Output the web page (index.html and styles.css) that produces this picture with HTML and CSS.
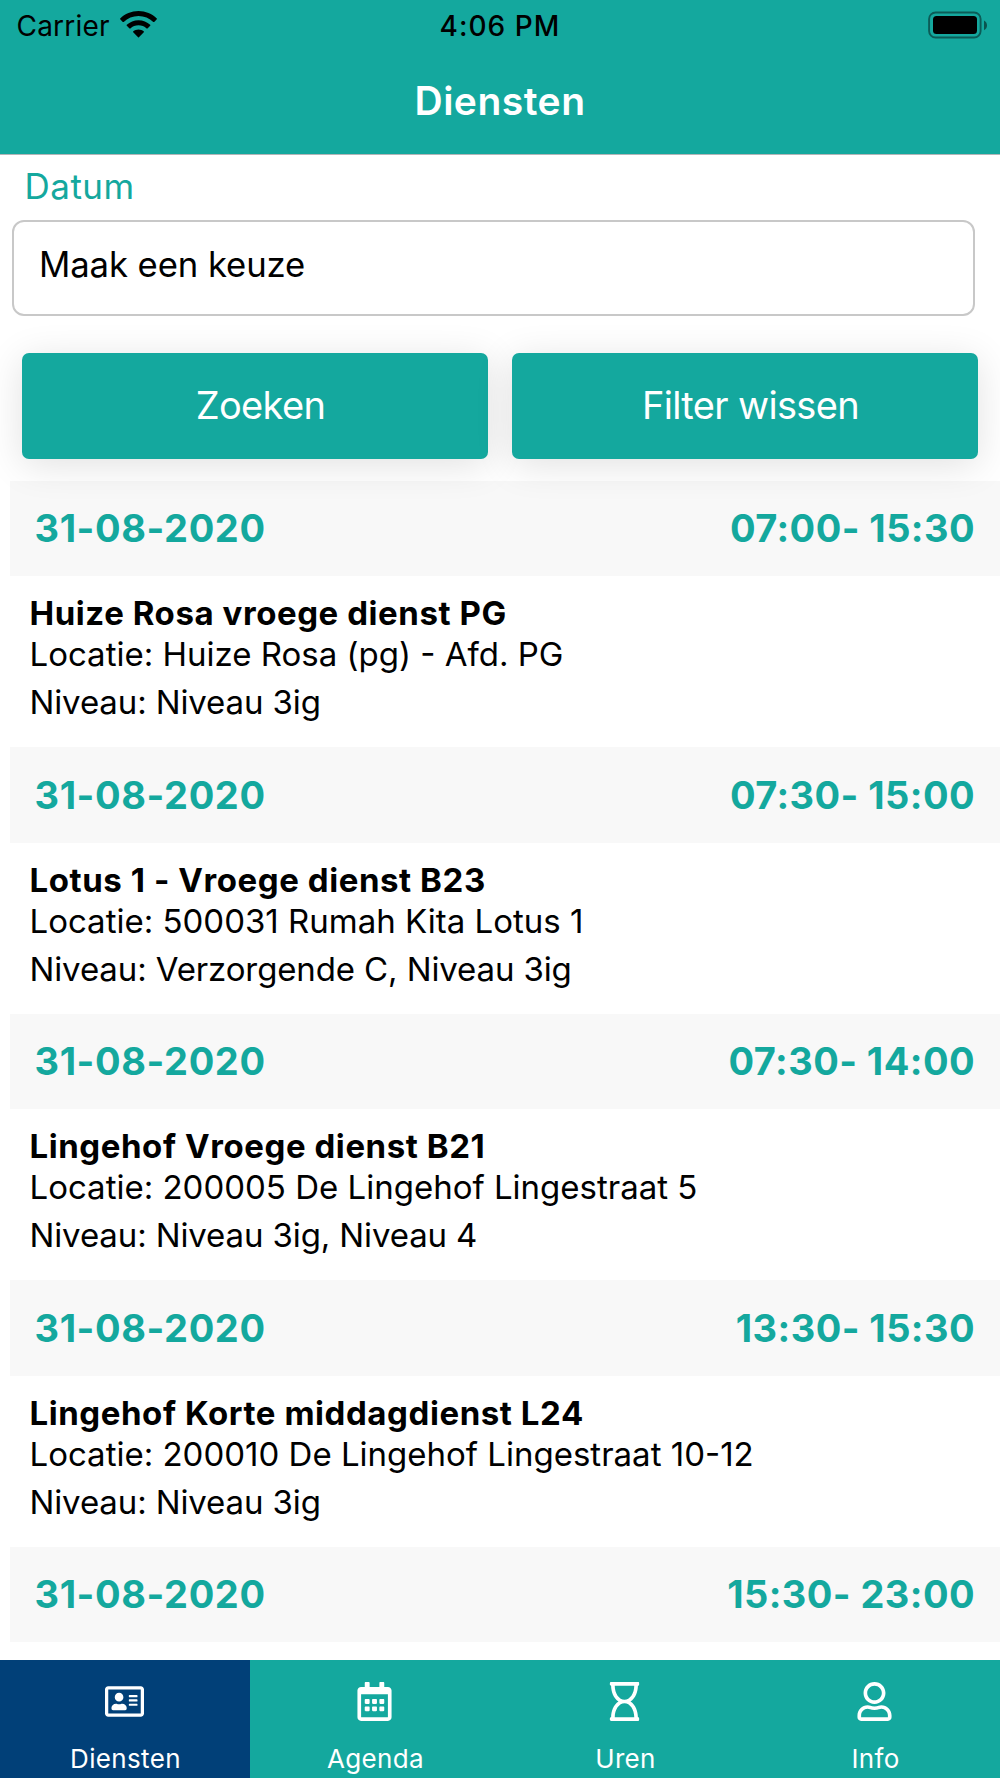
FILE: index.html
```html
<!DOCTYPE html>
<html lang="nl">
<head>
<meta charset="utf-8">
<title>Diensten</title>
<link rel="stylesheet" href="styles.css">
</head>
<body>
<div class="app">
  <header class="header">
    <div class="status">
      <div class="status-left">
        <span class="carrier">Carrier</span>
        <svg class="wifi" viewBox="0 0 37 27" width="37" height="27"><path d="M18.500 0C25.600 0 32.100 2.800 36.800 7.400q.4.4 0 .9l-2.600 2.600q-.4.4-.9 0C29.400 7.200 24.200 5 18.500 5S7.600 7.200 3.700 10.900q-.5.4-.9 0L.2 8.300q-.4-.5 0-.9C4.900 2.800 11.400 0 18.500 0z"/><path d="M18.500 9.200c4.500 0 8.600 1.700 11.700 4.600q.5.4 0 .9l-2.700 2.700q-.4.4-.9 0c-2.100-2-5-3.100-8.100-3.100s-6 1.100-8.100 3.100q-.5.4-.9 0L6.800 14.700q-.5-.5 0-.9c3.100-2.900 7.200-4.600 11.700-4.600z"/><path d="M18.500 18.400c2 0 3.800.7 5.200 1.900q.5.4.1.900l-4.900 5q-.4.4-.8 0l-4.900-5q-.4-.5.1-.9c1.400-1.200 3.200-1.900 5.200-1.900z"/></svg>
      </div>
      <span class="clock">4:06 PM</span>
      <div class="status-right">
        <svg class="battery" viewBox="0 0 60 28" width="60" height="28"><rect x="1.100" y="1.500" width="51.500" height="25" rx="6.500" fill="none" stroke="#000" stroke-opacity=".45" stroke-width="1.900"/><rect x="5" y="5" width="44" height="18" rx="3.500"/><path d="M56 9.500c4 2 4 7.800 0 9.700z" fill-opacity=".5"/></svg>
      </div>
    </div>
    <h1 class="title">Diensten</h1>
  </header>

  <main class="content">
    <div class="filter-label">Datum</div>
    <div class="select">Maak een keuze</div>
    <div class="actions">
      <button class="button">Zoeken</button>
      <button class="button">Filter wissen</button>
    </div>
    <section class="list">
      <article class="shift">
        <div class="shift-head"><span>31-08-2020</span><span class="time">07:00- 15:30</span></div>
        <div class="shift-body">
          <h2 class="name">Huize Rosa vroege dienst PG</h2>
          <p class="place">Locatie: Huize Rosa (pg) - Afd. PG</p>
          <p class="level">Niveau: Niveau 3ig</p>
        </div>
      </article>
      <article class="shift">
        <div class="shift-head"><span>31-08-2020</span><span class="time">07:30- 15:00</span></div>
        <div class="shift-body">
          <h2 class="name">Lotus 1 - Vroege dienst B23</h2>
          <p class="place">Locatie: 500031 Rumah Kita Lotus 1</p>
          <p class="level">Niveau: Verzorgende C, Niveau 3ig</p>
        </div>
      </article>
      <article class="shift">
        <div class="shift-head"><span>31-08-2020</span><span class="time">07:30- 14:00</span></div>
        <div class="shift-body">
          <h2 class="name">Lingehof Vroege dienst B21</h2>
          <p class="place">Locatie: 200005 De Lingehof Lingestraat 5</p>
          <p class="level">Niveau: Niveau 3ig, Niveau 4</p>
        </div>
      </article>
      <article class="shift">
        <div class="shift-head"><span>31-08-2020</span><span class="time">13:30- 15:30</span></div>
        <div class="shift-body">
          <h2 class="name">Lingehof Korte middagdienst L24</h2>
          <p class="place">Locatie: 200010 De Lingehof Lingestraat 10-12</p>
          <p class="level">Niveau: Niveau 3ig</p>
        </div>
      </article>
      <article class="shift">
        <div class="shift-head"><span>31-08-2020</span><span class="time">15:30- 23:00</span></div>
      </article>
    </section>
  </main>

  <nav class="tabs">
    <a class="tab active">
      <svg class="icon" viewBox="0 0 576 512" width="39" height="39"><path d="M528 32H48C21.500 32 0 53.500 0 80v352c0 26.500 21.500 48 48 48h480c26.500 0 48-21.500 48-48V80c0-26.500-21.500-48-48-48zm0 400H48V80h480v352zM208 256c35.300 0 64-28.700 64-64s-28.700-64-64-64-64 28.700-64 64 28.700 64 64 64zm-89.600 128h179.200c12.400 0 22.400-8.600 22.400-19.200v-19.200c0-31.800-30.100-57.600-67.200-57.600-10.800 0-18.700 8-44.800 8-26.900 0-33.400-8-44.800-8-37.100 0-67.200 25.800-67.200 57.600v19.200c0 10.600 10 19.200 22.400 19.200zM360 320h112c4.400 0 8-3.600 8-8v-16c0-4.400-3.600-8-8-8H360c-4.400 0-8 3.600-8 8v16c0 4.400 3.600 8 8 8zm0-64h112c4.400 0 8-3.600 8-8v-16c0-4.400-3.600-8-8-8H360c-4.400 0-8 3.600-8 8v16c0 4.400 3.600 8 8 8zm0-64h112c4.400 0 8-3.600 8-8v-16c0-4.400-3.600-8-8-8H360c-4.400 0-8 3.600-8 8v16c0 4.400 3.600 8 8 8z"/></svg>
      <span class="tab-label">Diensten</span>
    </a>
    <a class="tab">
      <svg class="icon" viewBox="0 0 448 512" width="39" height="39"><path d="M148 288h-40c-6.600 0-12-5.400-12-12v-40c0-6.600 5.400-12 12-12h40c6.600 0 12 5.400 12 12v40c0 6.600-5.400 12-12 12zm108-12v-40c0-6.600-5.400-12-12-12h-40c-6.600 0-12 5.400-12 12v40c0 6.600 5.400 12 12 12h40c6.600 0 12-5.400 12-12zm96 0v-40c0-6.600-5.400-12-12-12h-40c-6.600 0-12 5.400-12 12v40c0 6.600 5.400 12 12 12h40c6.600 0 12-5.400 12-12zm-96 96v-40c0-6.600-5.400-12-12-12h-40c-6.600 0-12 5.400-12 12v40c0 6.600 5.400 12 12 12h40c6.600 0 12-5.400 12-12zm-96 0v-40c0-6.600-5.400-12-12-12h-40c-6.600 0-12 5.400-12 12v40c0 6.600 5.400 12 12 12h40c6.600 0 12-5.400 12-12zm192 0v-40c0-6.600-5.400-12-12-12h-40c-6.600 0-12 5.400-12 12v40c0 6.600 5.400 12 12 12h40c6.600 0 12-5.400 12-12zm96-260v352c0 26.500-21.500 48-48 48H48c-26.500 0-48-21.500-48-48V112c0-26.500 21.500-48 48-48h48V12c0-6.600 5.400-12 12-12h40c6.600 0 12 5.400 12 12v52h128V12c0-6.600 5.400-12 12-12h40c6.600 0 12 5.400 12 12v52h48c26.500 0 48 21.500 48 48zm-48 346V160H48v298c0 3.300 2.700 6 6 6h340c3.300 0 6-2.700 6-6z"/></svg>
      <span class="tab-label">Agenda</span>
    </a>
    <a class="tab">
      <svg class="icon" viewBox="0 0 384 512" width="39" height="39"><path d="M368 48h4c6.627 0 12-5.373 12-12V12c0-6.627-5.373-12-12-12H12C5.373 0 0 5.373 0 12v24c0 6.627 5.373 12 12 12h4c0 80.564 32.188 165.807 97.180 208C47.899 298.381 16 383.900 16 464h-4c-6.627 0-12 5.373-12 12v24c0 6.627 5.373 12 12 12h360c6.627 0 12-5.373 12-12v-24c0-6.627-5.373-12-12-12h-4c0-80.564-32.188-165.807-97.180-208C336.102 213.619 368 128.100 368 48zM64 48h256c0 101.620-57.307 184-128 184S64 149.621 64 48zm256 416H64c0-101.620 57.308-184 128-184s128 82.380 128 184z"/></svg>
      <span class="tab-label">Uren</span>
    </a>
    <a class="tab">
      <svg class="icon" viewBox="0 0 448 512" width="39" height="39"><path d="M313.600 304c-28.700 0-42.500 16-89.600 16-47.100 0-60.800-16-89.600-16C60.200 304 0 364.200 0 438.400V464c0 26.500 21.500 48 48 48h352c26.500 0 48-21.500 48-48v-25.600c0-74.200-60.200-134.400-134.400-134.400zM400 464H48v-25.600c0-47.600 38.800-86.400 86.400-86.400 14.600 0 38.300 16 89.600 16 51.700 0 74.900-16 89.600-16 47.600 0 86.400 38.800 86.400 86.400V464zM224 288c79.500 0 144-64.500 144-144S303.500 0 224 0 80 64.500 80 144s64.500 144 144 144zm0-240c52.900 0 96 43.100 96 96s-43.100 96-96 96-96-43.100-96-96 43.100-96 96-96z"/></svg>
      <span class="tab-label">Info</span>
    </a>
  </nav>
</div>
</body>
</html>
```
FILE: styles.css
```css
* { box-sizing: border-box; }

body {
  margin: 0;
  background: #fff;
  color: #000;
  font-family: Inter, "Liberation Sans", sans-serif;
}

h1, h2, p { margin: 0; }

.app {
  display: flex;
  flex-direction: column;
  width: 1000px;
  height: 1778px;
  overflow: hidden;
}

/* Header */
.header {
  flex: none;
  height: 155px;
  background: #14a89e;
  border-bottom: 1px solid #b2b5b8;
}

.status {
  display: grid;
  grid-template-columns: 1fr auto 1fr;
  align-items: center;
  height: 50px;
  font-size: 28px;
  line-height: 52px;
}

.status-left {
  display: flex;
  align-items: center;
  gap: 10px;
  padding-left: 16.5px;
}

.carrier { letter-spacing: .2px; }
.wifi { margin-top: -3px; }
.clock { font-weight: 500; letter-spacing: 1.05px; }

.status-right {
  display: flex;
  justify-content: flex-end;
  padding-right: 12px;
}

.battery { margin-top: -2px; }

.title {
  height: 101px;
  line-height: 101px;
  color: #fff;
  font-size: 39px;
  font-weight: 600;
  letter-spacing: .5px;
  text-align: center;
}

/* Filter */
.content {
  flex: 1;
  min-height: 0;
  overflow: hidden;
}

.filter-label {
  padding-left: 24.5px;
  color: #14a89e;
  font-size: 35px;
  line-height: 62px;
  letter-spacing: .5px;
}

.select {
  width: 963px;
  height: 96px;
  margin: 3px 0 0 12px;
  padding: 0 25px;
  border: 2px solid #c8c8c8;
  border-radius: 12px;
  font-size: 34.7px;
  line-height: 84px;
  letter-spacing: -.1px;
}

.actions {
  display: grid;
  grid-template-columns: 1fr 1fr;
  gap: 24px;
  padding: 37px 22px 21.5px;
}

.button {
  height: 106px;
  padding: 0 0 0 11px;
  border: 0;
  border-radius: 7px;
  background: #14a89e;
  box-shadow: 0 6px 38px rgba(0, 0, 0, .12);
  color: #fff;
  font: 400 38px/104px Inter, "Liberation Sans", sans-serif;
  letter-spacing: -.65px;
  display: flex;
  justify-content: center;
  align-items: flex-start;
}

/* Shift list */
.list { padding-left: 10px; }

.shift-head {
  display: flex;
  align-items: center;
  justify-content: space-between;
  height: 95.5px;
  padding: 0 25px 0 24.5px;
  background: #f8f8f8;
  color: #14a89e;
  font-size: 38px;
  font-weight: 700;
  letter-spacing: .6px;
}

.time { letter-spacing: .43px; }

.shift-body {
  height: 171px;
  padding: 20px 18px 0 19.5px;
  font-size: 33px;
}

.name {
  font-size: 33px;
  font-weight: 700;
  line-height: 35px;
  letter-spacing: .57px;
}

.place, .level { line-height: 48px; }
.name + .place { margin-top: -1px; }
.level { letter-spacing: -.12px; }

/* Tab bar */
.tabs {
  flex: none;
  display: grid;
  grid-template-columns: repeat(4, 1fr);
  height: 118px;
  background: #14a89e;
}

.tab {
  display: flex;
  flex-direction: column;
  align-items: center;
  padding-top: 22px;
  color: #fff;
}

.active { background: #014078; }
.icon { margin-right: 1px; fill: currentColor; }

.tab-label {
  margin-top: 17px;
  padding-left: 1px;
  font-size: 26px;
  line-height: 41px;
  letter-spacing: .35px;
}
```
